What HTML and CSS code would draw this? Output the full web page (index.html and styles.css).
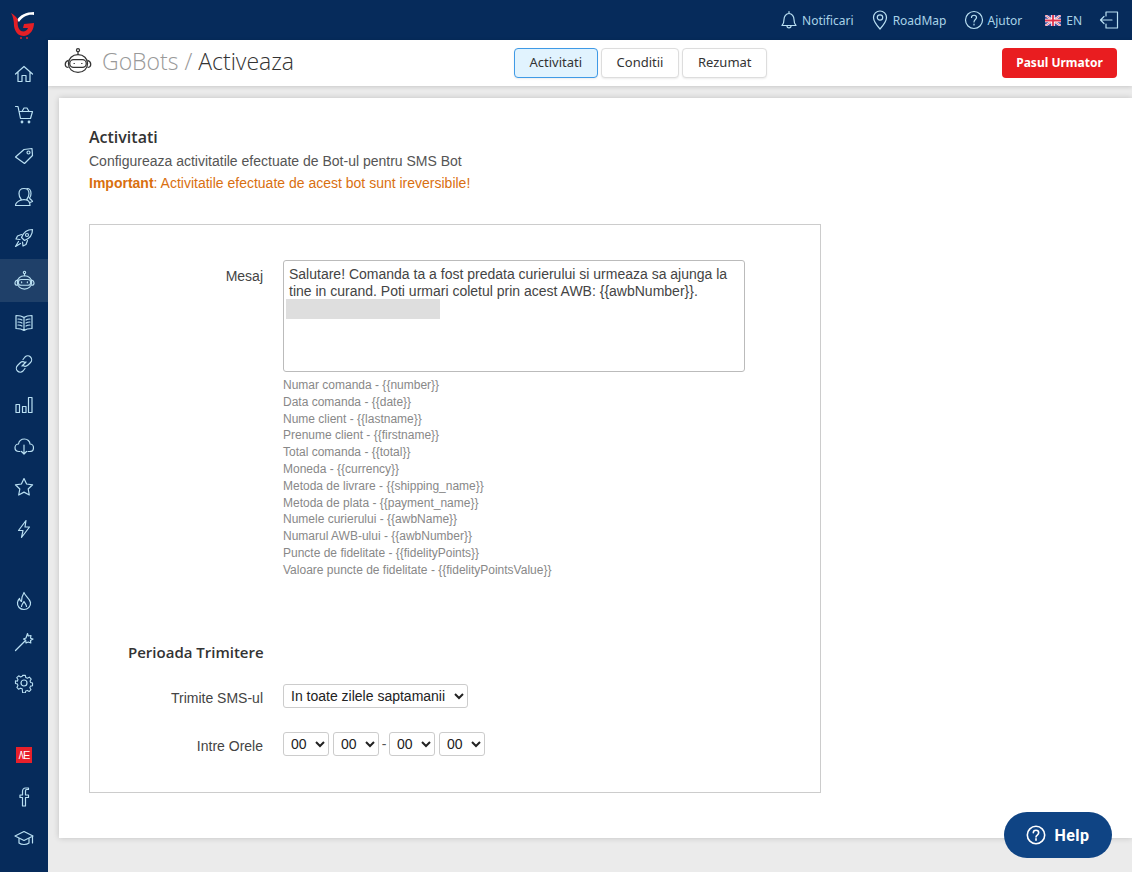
FILE: index.html
```html
<!DOCTYPE html>
<html lang="en">
<head>
    <meta charset="utf-8">
    <title>GoBots / Activeaza</title>
    <link rel="stylesheet" href="styles.css">
</head>
<body>
    <div class="app">
        <aside class="sidebar">
            <div class="logo">
                <svg width="24" height="28" viewBox="0 0 24 28">
                    <path d="M6 9C9 4 15 1 23 1L23 4C18 3 12 5 8 11Z" fill="#fff"/>
                    <path d="M0 2C3 4 6 6 7 9C6 13 7 18 10 20C13 21 16 20 17 17L12 17L13 13L23 12C23 18 20 24 13 25C7 25 4 21 3 15C3 10 2 5 0 2Z" fill="#e41f26"/>
                    <circle cx="10" cy="27" r="1" fill="#e41f26"/>
                    <circle cx="16" cy="27" r="1" fill="#e41f26"/>
                </svg>
            </div>
            <nav class="nav-group">
                <a class="nav-item"><svg class="ico" viewBox="0 0 20 20"><path d="M1.500 10 10 2.500l8.500 7.500M4 8v9.500h4v-6h4v6h4V8"/></svg></a>
                <a class="nav-item"><svg class="ico" viewBox="0 0 20 20"><path d="M1.500 1.500H4l2.500 12h10M5 6.500h13.500l-2 7"/><path d="M8 6.500 10 3h3l2 3.500"/><circle cx="8" cy="17" r=".8"/><circle cx="15" cy="17" r=".8"/></svg></a>
                <a class="nav-item"><svg class="ico" viewBox="0 0 20 20"><path d="M1.500 11 10 3.500l8-1 .5 7-8 8z"/><circle cx="14.500" cy="6.500" r="1.500"/></svg></a>
                <a class="nav-item"><svg class="ico" viewBox="0 0 20 20"><path d="M7 12c-1-1-2-3-2-5.500C5 3.500 7 1.500 10 1.500s5 2 5 5c0 2.500-1 4.500-2 5.500v1c-1-.5-5-.5-6 0z"/><path d="M1.500 18.500c0-3 3-4.500 5.500-5.500M13 13c2 1 3 2.500 3 5.500H1.500"/><path d="M13 1.500c2 0 4 1.500 4 5 0 2-.5 3.500-1.500 4.500.5 1.500 2 1.500 3 3.500l-2.500 1"/></svg></a>
                <a class="nav-item"><svg class="ico" viewBox="0 0 20 20"><path d="M18.500 1.500c-5 0-9 2.500-11 8l3 3c5.500-2 8-6 8-11z"/><circle cx="13" cy="7" r="1.500"/><path d="M7.500 6.500 3.500 8l-1.500 3 4 .5M13.500 12.500 12 16.500 9 18l-.5-4M4.500 13.500 1.500 18.500l5-3"/></svg></a>
                <a class="nav-item active"><svg class="ico bot" viewBox="0 0 22 22"><circle cx="11" cy="2.500" r="1.200"/><path d="M11 3.700V6"/><path d="M3.500 13c0-4 3-7 7.500-7s7.500 3 7.500 7-3 7-7.500 7-7.500-3-7.500-7z"/><path d="M3.500 10.500C2 11 1 12 1 13.500S2 16 3.500 16M18.500 10.500c1.500.5 2.500 1.500 2.500 3S20 16 18.500 16"/><rect x="4.500" y="10" width="13" height="6" rx="3"/><path d="M8 12.500v.8M14 12.500v.8"/></svg></a>
                <a class="nav-item"><svg class="ico" viewBox="0 0 20 20"><path d="M10 4.500C8 3 5 2.500 2 2.500v13c3 0 6 .5 8 2 2-1.500 5-2 8-2v-13c-3 0-6 .5-8 2zM10 4.500v13"/><path d="M4 6c1.500 0 3 .3 4 1M4 9c1.500 0 3 .3 4 1M4 12c1.500 0 3 .3 4 1M16 6c-1.500 0-3 .3-4 1M16 9c-1.500 0-3 .3-4 1M16 12c-1.500 0-3 .3-4 1"/></svg></a>
                <a class="nav-item"><svg class="ico" viewBox="0 0 20 20"><path d="M8 12l4-4"/><path d="M9 5.500l2-2.500c1.500-1.500 4-1.500 5.500 0s1.500 4 0 5.500L14 11c-1.500 1.500-3.500 1.500-5 .5"/><path d="M11 14.500 9 17c-1.500 1.500-4 1.500-5.500 0s-1.500-4 0-5.500L6 9c1.500-1.500 3.500-1.500 5-.5"/></svg></a>
                <a class="nav-item"><svg class="ico" viewBox="0 0 20 20"><path d="M2 9.500h3.500v8H2zM8.500 11.500H12v6H8.500zM14.500 2.500H18v15h-3.500z"/></svg></a>
                <a class="nav-item"><svg class="ico" viewBox="0 0 20 20"><path d="M6 15.500H5c-2.500 0-4-1.800-4-3.800S2.500 8 4.500 8C5 5 7.500 3 10.500 3c3 0 5.500 2.500 5.500 5 2 0 3.500 1.700 3.500 3.700s-1.500 3.800-4 3.800H14"/><path d="M10 9v9M7.500 15.500 10 18l2.500-2.500"/></svg></a>
                <a class="nav-item"><svg class="ico" viewBox="0 0 20 20"><path d="M10 1.500l2.600 5.500 6 .8-4.400 4.200 1.100 6L10 15.100 4.700 18l1.100-6L1.400 7.800l6-.8z"/></svg></a>
                <a class="nav-item"><svg class="ico" viewBox="0 0 20 20"><path d="M12 1.500 4.500 11.500H9l-1.500 7L15.500 8H11z"/></svg></a>
            </nav>
            <nav class="nav-group">
                <a class="nav-item"><svg class="ico" viewBox="0 0 20 20"><path d="M10 1.500c.5 3 5.500 5.500 6.500 10 .5 3.500-2.500 7-6.500 7s-7-3-6.500-7c.3-2 1-3 2-4 .2 1.500.8 2.500 2 3C7.500 7 8.500 4 10 1.500z"/><path d="M7.500 15.500c0-2 1.500-3 2.500-5 1 2 2.500 3 2.500 5"/></svg></a>
                <a class="nav-item"><svg class="ico" viewBox="0 0 20 20"><path d="M1.500 18.500 11 9"/><path d="M13.500 1.500l.8 2.500 2.700-.5-.5 2.700 2.500.8-2.500 1.500.3 2.500-2.500-1-2.300 1-.3-2.700L9.500 7l2.500-1z"/></svg></a>
                <a class="nav-item"><svg class="ico" viewBox="0 0 20 20"><circle cx="10" cy="10" r="3"/><path d="M8.500 1.500h3l.5 2.500 1.800.8 2.200-1.300 2 2.200-1.300 2 .7 1.800 2.100.5v3l-2.300.5-.7 1.800 1.300 2.100-2.100 2.100-2-1.300-1.800.7-.4 2.100H8.500L8 16.400l-1.800-.7-2.100 1.300-2-2.100 1.200-2.100-.7-1.800-2.100-.5v-3L2.600 8l.7-1.800L2 4.100 4.100 2l2.100 1.300L8 2.500z" transform="translate(1 1) scale(.9)"/></svg></a>
            </nav>
            <nav class="nav-group">
                <a class="nav-item"><span class="ae-badge">/\E</span></a>
                <a class="nav-item"><svg class="ico" viewBox="0 0 20 20"><path d="M12.500 2.500h2V1h-3C9.500 1 8.500 2.500 8.500 4.500V8H6v2.500h2.500V19h3v-8.500h3V8h-3V5c0-1.500 0-2.500 1-2.500z"/></svg></a>
                <a class="nav-item"><svg class="ico" viewBox="0 0 20 20"><path d="M10 3.500 1 8l9 4.500L19 8z"/><path d="M5 10.500V15c2.500 2 7.500 2 10 0v-4.500M18.500 8.500V15"/></svg></a>
            </nav>
        </aside>
        <div class="main">
            <header class="topbar">
                <a class="top-link"><svg class="ico" viewBox="0 0 20 20"><path d="M3 15.500c1.500-1.500 2-3 2-6 0-3 2-6 5-6s5 3 5 6c0 3 .5 4.500 2 6zM10 3.500V1.500M8 16c0 2.500 4 2.500 4 0"/></svg>Notificari</a>
                <a class="top-link top-road"><svg class="ico" viewBox="0 0 20 20"><path d="M10 19C6 14.500 3.500 11 3.500 7.500a6.500 6.500 0 0 1 13 0C16.500 11 14 14.500 10 19z"/><circle cx="10" cy="7.500" r="2.700"/></svg>RoadMap</a>
                <a class="top-link top-help"><svg class="ico" viewBox="0 0 20 20"><circle cx="10" cy="10" r="8.500"/><path d="M7.500 7.500C7.500 4.500 12.500 4.500 12.500 7.500c0 2-2.500 2-2.500 4.500M10 14v1"/></svg>Ajutor</a>
                <a class="top-link lang">
                    <svg class="flag" viewBox="0 0 16 11">
                        <rect width="16" height="11" fill="#41479b"/>
                        <path d="M0 0 16 11M16 0 0 11" stroke="#fff" stroke-width="2.200"/>
                        <path d="M0 0 16 11M16 0 0 11" stroke="#e0334c" stroke-width=".7"/>
                        <path d="M8 0v11M0 5.500h16" stroke="#fff" stroke-width="3.600"/>
                        <path d="M8 0v11M0 5.500h16" stroke="#e0334c" stroke-width="1.800"/>
                    </svg>EN</a>
                <a class="top-link logout"><svg class="ico" viewBox="0 0 20 20"><path d="M7 6V2h11.500v16H7v-4M13 10H1.500M5 6.500 1.500 10 5 13.500"/></svg></a>
            </header>
            <div class="subbar">
                <div class="page-title">
                    <svg class="title-ico" viewBox="0 0 22 22"><circle cx="11" cy="2.500" r="1.200"/><path d="M11 3.700V6"/><path d="M3.500 13c0-4 3-7 7.500-7s7.500 3 7.500 7-3 7-7.500 7-7.500-3-7.500-7z"/><path d="M3.500 10.500C2 11 1 12 1 13.500S2 16 3.500 16M18.500 10.500c1.500.5 2.500 1.500 2.500 3S20 16 18.500 16"/><rect x="4.500" y="10" width="13" height="6" rx="3"/><path d="M8 12.500v.8M14 12.500v.8"/></svg>
                    <h1><span class="crumb">GoBots /</span> Activeaza</h1>
                </div>
                <div class="steps">
                    <button class="step step-active">Activitati</button>
                    <button class="step">Conditii</button>
                    <button class="step">Rezumat</button>
                </div>
                <button class="btn-next">Pasul Urmator</button>
            </div>
            <div class="content">
                <section class="card">
                    <h2 class="card-title">Activitati</h2>
                    <p class="card-text">Configureaza activitatile efectuate de Bot-ul pentru SMS Bot</p>
                    <p class="card-warn"><b>Important</b>: Activitatile efectuate de acest bot sunt ireversibile!</p>
                    <div class="form-box">
                        <div class="form-row">
                            <label class="form-label label-msg">Mesaj</label>
                            <div class="form-field">
                                <div class="msg-wrap">
                                    <textarea class="msg-input">Salutare! Comanda ta a fost predata curierului si urmeaza sa ajunga la tine in curand. Poti urmari coletul prin acest AWB: {{awbNumber}}.</textarea>
                                    <span class="msg-mask"></span>
                                </div>
                                <ul class="var-list">
                                    <li>Numar comanda - {{number}}</li>
                                    <li>Data comanda - {{date}}</li>
                                    <li>Nume client - {{lastname}}</li>
                                    <li>Prenume client - {{firstname}}</li>
                                    <li>Total comanda - {{total}}</li>
                                    <li>Moneda - {{currency}}</li>
                                    <li>Metoda de livrare - {{shipping_name}}</li>
                                    <li>Metoda de plata - {{payment_name}}</li>
                                    <li>Numele curierului - {{awbName}}</li>
                                    <li>Numarul AWB-ului - {{awbNumber}}</li>
                                    <li>Puncte de fidelitate - {{fidelityPoints}}</li>
                                    <li>Valoare puncte de fidelitate - {{fidelityPointsValue}}</li>
                                </ul>
                            </div>
                        </div>
                        <h3 class="form-heading">Perioada Trimitere</h3>
                        <div class="form-row row-center row-days">
                            <label class="form-label label-sel">Trimite SMS-ul</label>
                            <select class="sel sel-days"><option>In toate zilele saptamanii</option></select>
                        </div>
                        <div class="form-row row-center row-hours">
                            <label class="form-label label-sel">Intre Orele</label>
                            <div class="hours">
                                <select class="sel"><option>00</option></select>
                                <select class="sel"><option>00</option></select>
                                <span class="dash">-</span>
                                <select class="sel"><option>00</option></select>
                                <select class="sel"><option>00</option></select>
                            </div>
                        </div>
                    </div>
                </section>
            </div>
        </div>
    </div>
    <button class="help-btn">
        <svg class="help-ico" viewBox="0 0 20 20"><circle cx="10" cy="10" r="8.700"/><path d="M7.300 7.800C7.300 4.400 12.700 4.400 12.700 7.800c0 2.200-2.700 2.200-2.700 4.200M10 13.800v1.400"/></svg>
        Help
    </button>
</body>
</html>
```

FILE: styles.css
```css
* {
    box-sizing: border-box;
}
html, body {
    margin: 0;
    height: 100%;
    overflow: hidden;
}
body {
    background: #ebebeb;
    font-family: "Liberation Sans", Arial, sans-serif;
    font-size: 14px;
    color: #444;
}
.app {
    display: flex;
    height: 872px;
}

/* sidebar */
.sidebar {
    width: 48px;
    flex-shrink: 0;
    background: #062b5b;
}
.logo {
    height: 53px;
    padding: 11px 0 0 11px;
}
.logo svg {
    display: block;
}
.nav-group {
    display: flex;
    flex-direction: column;
    margin-bottom: 31px;
}
.nav-item {
    height: 41.2px;
    display: flex;
    align-items: center;
    justify-content: center;
}
.nav-item.active {
    height: 43.2px;
    background: #1f4069;
}
.ico {
    width: 20px;
    height: 20px;
    fill: none;
    stroke: #b9dff2;
    stroke-width: 1.2;
    stroke-linejoin: round;
    stroke-linecap: round;
}
.ico.bot {
    width: 21px;
    height: 21px;
}
.ae-badge {
    width: 16px;
    height: 16px;
    background: #e8202a;
    color: #fff;
    font-size: 11px;
    line-height: 16px;
    letter-spacing: -1px;
    text-align: center;
}

/* top bar */
.main {
    flex: 1;
    min-width: 0;
    display: flex;
    flex-direction: column;
}
.topbar {
    height: 40px;
    background: #062b5b;
    display: flex;
    align-items: center;
    justify-content: flex-end;
    padding-right: 13px;
    flex-shrink: 0;
}
.top-link {
    display: flex;
    align-items: center;
    gap: 3px;
    margin-left: 19px;
    font-family: "Noto Sans", sans-serif;
    font-size: 12px;
    color: #a9d3e8;
}
.top-road {
    margin-left: 16px;
}
.top-help {
    margin-left: 18px;
}
.flag {
    width: 16px;
    height: 11px;
}
.lang {
    gap: 5px;
    margin-left: 23px;
}
.logout {
    margin-left: 17px;
}

/* page header */
.subbar {
    height: 46px;
    flex-shrink: 0;
    background: #fff;
    box-shadow: 0 1px 4px rgba(0, 0, 0, .15);
    display: flex;
    align-items: center;
    padding: 0 15px 0 16px;
    position: relative;
}
.page-title {
    display: flex;
    align-items: center;
    gap: 10px;
    width: 450px;
    padding-bottom: 4px;
}
.title-ico {
    width: 28px;
    height: 28px;
    fill: none;
    stroke: #333;
    stroke-width: 1;
}
.page-title h1 {
    margin: 0;
    font-family: "Open Sans", sans-serif;
    font-weight: 300;
    font-size: 23px;
    color: #333;
}
.crumb {
    color: #999;
}
.steps {
    display: flex;
    gap: 3.500px;
}
.step {
    height: 30px;
    padding: 0 14.500px 2px;
    background: #fff;
    border: 1px solid #ddd;
    border-radius: 4px;
    font-family: "Noto Sans", sans-serif;
    font-size: 13px;
    color: #333;
    box-shadow: 0 1px 2px rgba(0, 0, 0, .08);
}
.step-active {
    background: #e1f3fe;
    border-color: #3f9ae6;
}
.btn-next {
    margin-left: auto;
    width: 115px;
    height: 30px;
    padding-bottom: 2px;
    background: #e91d20;
    border: 0;
    border-radius: 4px;
    font-family: "Noto Sans", sans-serif;
    font-weight: 700;
    font-size: 12px;
    color: #fff;
}

/* card */
.content {
    padding: 12px 0 0 11px;
}
.card {
    height: 740px;
    padding: 29px 30px 0 30px;
    background: #fff;
    box-shadow: 0 0 6px rgba(0, 0, 0, .18);
}
.card-title {
    margin: 0;
    font-family: "Open Sans", sans-serif;
    font-weight: 600;
    font-size: 16px;
    line-height: 20px;
    color: #333;
}
.card-text {
    margin: 3px 0 0;
    line-height: 22px;
    color: #555;
}
.card-warn {
    margin: 0;
    line-height: 22px;
    color: #d96f0f;
}
.form-box {
    width: 732px;
    height: 569px;
    margin-top: 30px;
    padding-top: 35px;
    border: 1px solid #ccc;
}
.form-row {
    display: flex;
}
.form-label {
    width: 173px;
    margin-right: 20px;
    text-align: right;
    color: #444;
}
.label-msg {
    padding-top: 8px;
}
.label-sel {
    padding-top: 4px;
}
.msg-wrap {
    position: relative;
    height: 112px;
}
.msg-input {
    display: block;
    width: 462px;
    height: 112px;
    padding: 5px;
    border: 1px solid #bbb;
    border-radius: 3px;
    resize: none;
    font-family: "Liberation Sans", Arial, sans-serif;
    font-size: 14px;
    line-height: 17px;
    color: #444;
}
.msg-mask {
    position: absolute;
    left: 3px;
    top: 39px;
    width: 154px;
    height: 20px;
    background: #dedede;
}
.var-list {
    list-style: none;
    margin: 5px 0 0;
    padding: 0;
    font-size: 12px;
    line-height: 16.800px;
    color: #888;
}
.form-heading {
    margin: 63px 0 0 38px;
    font-family: "Open Sans", sans-serif;
    font-weight: 600;
    font-size: 15px;
    line-height: 20px;
    color: #333;
}
.row-center {
    align-items: center;
}
.row-days {
    margin-top: 22px;
}
.row-hours {
    margin-top: 24px;
}
.sel {
    height: 24px;
    padding-left: 3px;
    background: #fff;
    border: 1px solid #ccc;
    border-radius: 3px;
    font-family: "Liberation Sans", Arial, sans-serif;
    font-size: 14px;
    color: #222;
}
.hours {
    display: flex;
    align-items: center;
    gap: 4px;
}
.hours .sel {
    width: 46px;
}
.sel-days {
    width: 185px;
}
.dash {
    margin: 0 -1.300px;
    color: #555;
}

/* help */
.help-btn {
    position: fixed;
    left: 1004px;
    top: 812px;
    width: 108px;
    height: 46px;
    display: flex;
    align-items: center;
    justify-content: center;
    gap: 8px;
    background: #0f4484;
    border: 0;
    border-radius: 23px;
    font-family: "Roboto", sans-serif;
    font-weight: 700;
    font-size: 16px;
    letter-spacing: .5px;
    color: #fff;
}
.help-ico {
    width: 20px;
    height: 20px;
    fill: none;
    stroke: #fff;
    stroke-width: 1.600;
    stroke-linecap: round;
}
```
